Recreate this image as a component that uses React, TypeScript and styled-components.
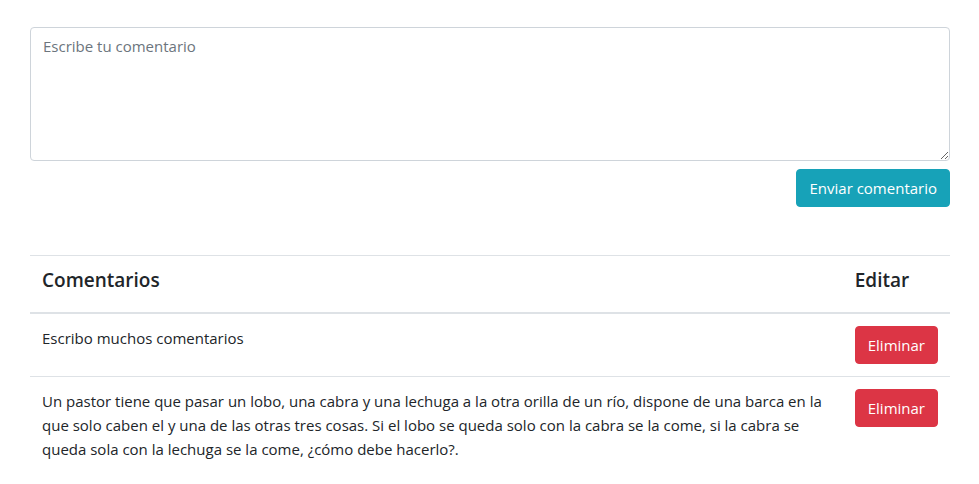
import React from "react";
import styled, { createGlobalStyle } from "styled-components";

const Global = createGlobalStyle`
  html, body { margin: 0; padding: 0; background: #fff; }
  body {
    font-family: "Open Sans", "Noto Sans", sans-serif;
    font-size: 15px;
    line-height: 24px;
    color: #212529;
  }
  *, *::before, *::after { box-sizing: border-box; }
`;

const Page = styled.div`
  padding: 27px 29px 0 30px;
`;

const Form = styled.form`
  display: flex;
  flex-direction: column;
  align-items: flex-end;
  gap: 8px;
`;

const TextArea = styled.textarea`
  display: block;
  width: 100%;
  height: 134px;
  padding: 6px 12px;
  font-family: inherit;
  font-size: 15px;
  line-height: 24px;
  color: #495057;
  border: 1px solid #ced4da;
  border-radius: 4px;
  resize: vertical;
  outline: none;
  &::placeholder { color: #6c757d; }
`;

const Button = styled.button<{ $variant: "info" | "danger" }>`
  font-family: inherit;
  font-size: 15px;
  line-height: 24px;
  padding: 6px 12px;
  height: 38px;
  border: 1px solid ${(p) => (p.$variant === "info" ? "#17a2b8" : "#dc3545")};
  background: ${(p) => (p.$variant === "info" ? "#17a2b8" : "#dc3545")};
  color: #fff;
  border-radius: 4px;
  cursor: pointer;
  white-space: nowrap;
`;

const Table = styled.table`
  width: 100%;
  margin-top: 48px;
  border-collapse: collapse;
`;

const Th = styled.th`
  text-align: left;
  padding: 12px;
  border-top: 1px solid #dee2e6;
  border-bottom: 2px solid #dee2e6;
  vertical-align: bottom;
`;

const HeadTitle = styled.h5`
  margin: 0 0 8px;
  font-size: 19px;
  line-height: 24px;
  font-weight: 600;
`;

const Td = styled.td<{ $narrow?: boolean }>`
  padding: 12px;
  border-top: 1px solid #dee2e6;
  vertical-align: top;
  width: ${(p) => (p.$narrow ? "1%" : "auto")};
`;

const comments = [
  "Escribo muchos comentarios",
  "Un pastor tiene que pasar un lobo, una cabra y una lechuga a la otra orilla de un río, dispone de una barca en la que solo caben el y una de las otras tres cosas. Si el lobo se queda solo con la cabra se la come, si la cabra se queda sola con la lechuga se la come, ¿cómo debe hacerlo?.",
];

export default function App() {
  return (
    <>
      <Global />
      <Page>
        <Form onSubmit={(e) => e.preventDefault()}>
          <TextArea placeholder="Escribe tu comentario" />
          <Button $variant="info" type="submit">Enviar comentario</Button>
        </Form>
        <Table>
          <thead>
            <tr>
              <Th><HeadTitle>Comentarios</HeadTitle></Th>
              <Th><HeadTitle>Editar</HeadTitle></Th>
            </tr>
          </thead>
          <tbody>
            {comments.map((c, i) => (
              <tr key={i}>
                <Td>{c}</Td>
                <Td $narrow><Button $variant="danger">Eliminar</Button></Td>
              </tr>
            ))}
          </tbody>
        </Table>
      </Page>
    </>
  );
}
